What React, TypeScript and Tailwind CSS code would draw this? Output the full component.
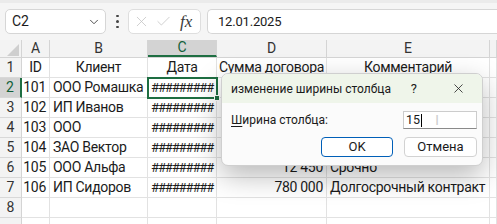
import React from "react";
import { ChevronDown, X, Check } from "lucide-react";

const widths = ["w-[22px]", "w-[28px]", "w-[98px]", "w-[69px]", "w-[110px]", "w-[163px]", "w-[7px]"];

type Row = { n: string; cells: string[] };

const rows: Row[] = [
  { n: "1", cells: ["ID", "Клиент", "Дата", "Сумма договора", "Комментарий", ""] },
  { n: "2", cells: ["101", "ООО Ромашка", "#########", "", "", ""] },
  { n: "3", cells: ["102", "ИП Иванов", "#########", "", "", ""] },
  { n: "4", cells: ["103", "ООО", "#########", "", "", ""] },
  { n: "5", cells: ["104", "ЗАО Вектор", "#########", "", "", ""] },
  { n: "6", cells: ["105", "ООО Альфа", "#########", "12 450", "Срочно", ""] },
  { n: "7", cells: ["106", "ИП Сидоров", "#########", "780 000", "Долгосрочный контракт", ""] },
  { n: "8", cells: ["", "", "", "", "", ""] },
  { n: "", cells: ["", "", "", "", "", ""] },
];

function align(ri: number, ci: number) {
  if (ri === 0) return "justify-center text-[14px] tracking-[-0.3px]";
  if (ci === 2) return "justify-start pl-[3px] text-[13px] tracking-[-1.1px]";
  if (ci === 0 || ci === 3) return "justify-end pr-[3px] text-[14px] tracking-[-0.3px]";
  return "justify-start pl-[3px] text-[14px] tracking-[-0.3px]";
}

export default function App() {
  return (
    <div className="relative w-[497px] h-[224px] overflow-hidden bg-white font-['Roboto',sans-serif] text-[#1b1b1b]">
      {/* toolbar */}
      <div className="h-[40px] bg-[#f5f5f5] border-t-[3px] border-[#ebebeb] flex items-center">
        <div className="ml-[5px] w-[101px] h-[25px] bg-white border border-[#d6d6d6] rounded-[5px] flex items-center justify-between pl-[6px] pr-[4px]">
          <span className="text-[14px] text-[#1b1b1b]">C2</span>
          <ChevronDown size={14} strokeWidth={1.6} color="#444" />
        </div>
        <div className="ml-[10px] w-[3px] flex flex-col gap-[3px] items-center">
          <div className="w-[2.5px] h-[2.5px] rounded-full bg-[#444]" />
          <div className="w-[2.5px] h-[2.5px] rounded-full bg-[#444]" />
          <div className="w-[2.5px] h-[2.5px] rounded-full bg-[#444]" />
        </div>
        <div className="ml-[9px] w-[73px] h-[25px] bg-white border border-[#dedede] rounded-[5px] flex items-center pl-[4px]">
          <X size={17} strokeWidth={1.1} color="#c4c4c4" />
          <Check size={17} strokeWidth={1.1} color="#c4c4c4" className="ml-[5px]" />
          <span className="ml-[8px] font-['Liberation_Serif',serif] italic text-[17px] text-[#3a3a3a] leading-none">fx</span>
        </div>
        <div className="ml-[6px] flex-1 h-[25px] bg-white border border-[#d6d6d6] border-r-0 rounded-l-[5px] flex items-center pl-[10px]">
          <span className="text-[13px] tracking-[-0.2px]">12.01.2025</span>
        </div>
      </div>

      {/* column headers */}
      <div className="flex h-[18px] bg-[#f3f3f3] border-b border-[#d4d4d4]">
        <div className={`${widths[0]} relative border-r border-[#d4d4d4]`}>
          <svg width="22" height="17" className="absolute left-0 top-0">
            <polygon points="19,4 19,16 7,16" fill="#cfcfcf" />
          </svg>
        </div>
        {["A", "B", "C", "D", "E", ""].map((l, i) => (
          <div
            key={i}
            className={`${widths[i + 1]} flex items-center justify-center text-[14px] border-r border-[#d4d4d4] ${
              i === 2 ? "bg-[#d3d3d3] text-[#11603a] border-b-2 border-b-[#1e6e42]" : "text-[#333]"
            }`}
          >
            {l}
          </div>
        ))}
      </div>

      {/* rows */}
      {rows.map((r, ri) => (
        <div key={ri} className="flex h-[20px]">
          <div
            className={`${widths[0]} flex items-center justify-center text-[14px] border-b border-[#d8d8d8] ${
              ri === 1
                ? "bg-[#d3d3d3] text-[#11603a] border-r-2 border-r-[#1e6e42]"
                : "bg-[#f3f3f3] text-[#333] border-r border-r-[#d4d4d4]"
            }`}
          >
            {r.n}
          </div>
          {r.cells.map((c, ci) => (
            <div
              key={ci}
              className={`${widths[ci + 1]} flex items-center overflow-hidden whitespace-nowrap border-r border-b border-[#e2e2e2] ${align(ri, ci)}`}
            >
              {c}
            </div>
          ))}
        </div>
      ))}

      {/* selection C2 */}
      <div className="absolute left-[147px] top-[77px] w-[71px] h-[22px] border-2 border-[#1e6e42] pointer-events-none" />
      <div className="absolute left-[214px] top-[95px] w-[6px] h-[6px] bg-[#1e6e42] border border-white" />

      {/* dialog */}
      <div className="absolute left-[221px] top-[73px] w-[262px] h-[93px] rounded-[7px] border border-[#cfcfcf] bg-[#fbfbfb] shadow-[0_10px_28px_rgba(0,0,0,0.28)] overflow-hidden flex flex-col">
        <div className="h-[29px] bg-[#eff5ea] flex items-center pl-[9px] pr-[16px] text-[12px] text-[#1a1a1a] whitespace-nowrap">
          <span className="flex-1">изменение ширины столбца</span>
          <span className="mr-[34px] text-[13px]">?</span>
          <X size={15} strokeWidth={1.3} color="#222" />
        </div>
        <div className="flex-1 flex flex-col px-[9px] pr-[5px] pt-[8px]">
          <div className="flex items-center justify-between">
            <span className="text-[12px] text-[#1a1a1a]">
              <span className="underline underline-offset-[2px]">Ш</span>ирина столбца:
            </span>
            <div className="relative w-[74px] h-[18px] bg-white border border-[#cccccc] border-b-[#8a8a8a] flex items-center pl-[2px]">
              <span className="text-[12.5px] text-[#1a1a1a] leading-none">15</span>
              <span className="w-[1px] h-[13px] bg-black ml-[1px]" />
              <span className="absolute left-[31px] top-[1px] text-[#cfcfcf] text-[14px] leading-none font-['DejaVu_Sans',sans-serif]">I</span>
            </div>
          </div>
          <div className="flex justify-end gap-[11px] mt-[8px]">
            <button className="w-[72px] h-[20px] rounded-[4px] border border-[#005fb8] bg-white text-[13px] text-[#1a1a1a] flex items-center justify-center">
              OK
            </button>
            <button className="w-[73px] h-[20px] rounded-[4px] border border-[#d2d2d2] bg-white text-[13px] text-[#1a1a1a] flex items-center justify-center">
              Отмена
            </button>
          </div>
        </div>
      </div>
    </div>
  );
}
